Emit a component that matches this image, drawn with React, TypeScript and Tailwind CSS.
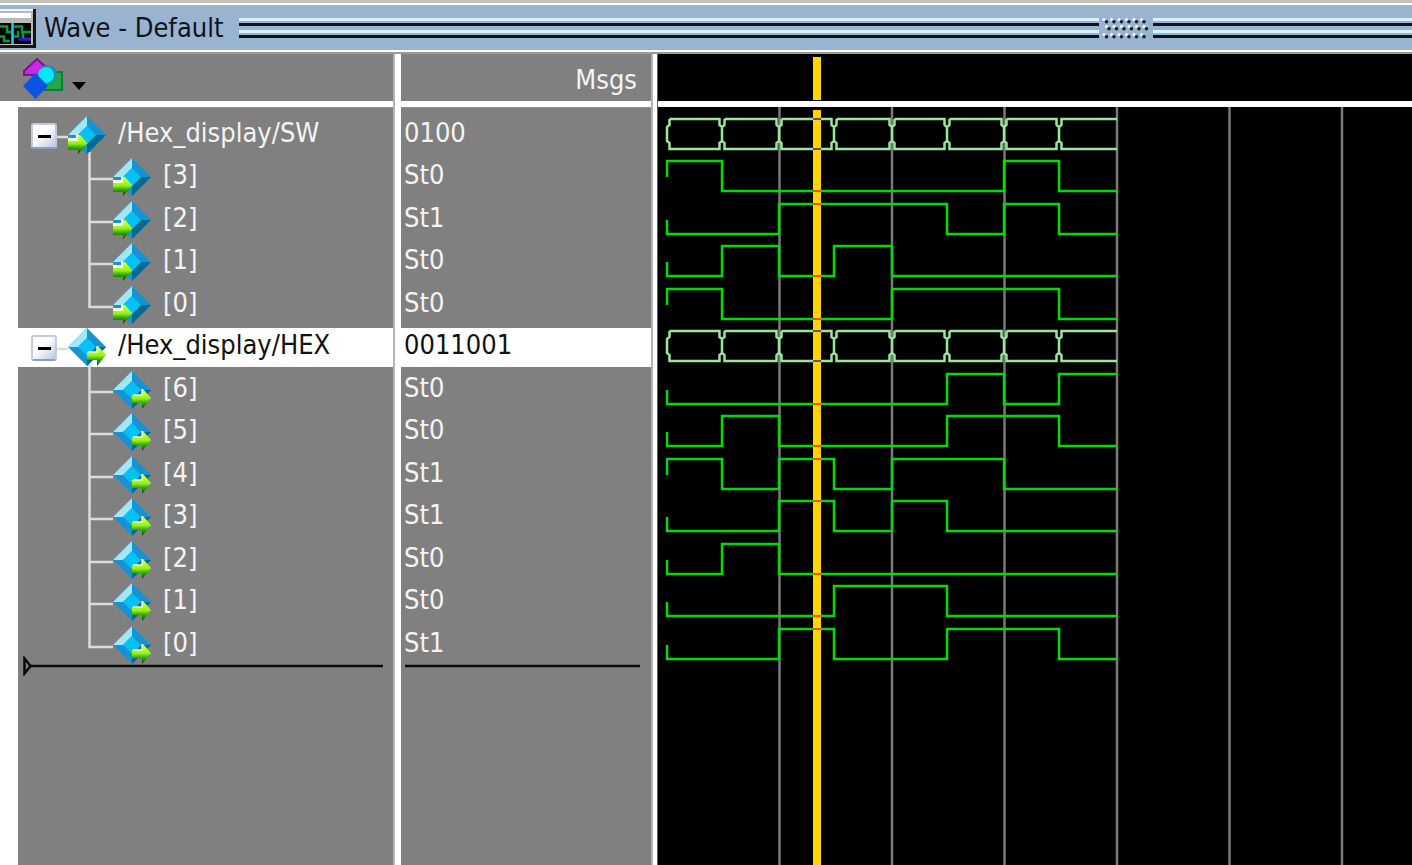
import { useState } from "react";

type Direction = "in" | "out";

type Signal = {
  id: string;
  group: string;
  name: string;
  value: string;
  direction: Direction;
  bits?: string;
  last?: boolean;
};

const SIGNALS: Signal[] = [
  { id: "sw", group: "sw", name: "/Hex_display/SW", value: "0100", direction: "in" },
  { id: "sw3", group: "sw", name: "[3]", value: "St0", direction: "in", bits: "10000010" },
  { id: "sw2", group: "sw", name: "[2]", value: "St1", direction: "in", bits: "00111010" },
  { id: "sw1", group: "sw", name: "[1]", value: "St0", direction: "in", bits: "01010000" },
  { id: "sw0", group: "sw", name: "[0]", value: "St0", direction: "in", bits: "10001110", last: true },
  { id: "hex", group: "hex", name: "/Hex_display/HEX", value: "0011001", direction: "out" },
  { id: "hex6", group: "hex", name: "[6]", value: "St0", direction: "out", bits: "00000101" },
  { id: "hex5", group: "hex", name: "[5]", value: "St0", direction: "out", bits: "01000110" },
  { id: "hex4", group: "hex", name: "[4]", value: "St1", direction: "out", bits: "10101100" },
  { id: "hex3", group: "hex", name: "[3]", value: "St1", direction: "out", bits: "00101000" },
  { id: "hex2", group: "hex", name: "[2]", value: "St0", direction: "out", bits: "01000000" },
  { id: "hex1", group: "hex", name: "[1]", value: "St0", direction: "out", bits: "00011000" },
  { id: "hex0", group: "hex", name: "[0]", value: "St1", direction: "out", bits: "00100110", last: true },
];

const SELECTED = "hex";

// Wave canvas geometry, measured from the canvas' own top left corner.
const EDGES = [9, 64, 121, 176, 234, 289, 346, 401, 459];
const CURSOR_X = 155;
const CURSOR_W = 8;
const CURSOR_SEGMENT = 2;
const GRID = Array.from({ length: 30 }, (_, i) => 121.5 + i * 112.5);

function rowTop(index: number) {
  return 9 + Math.floor(index * 42.5);
}

function bitPath(bits: string, top: number) {
  const high = top + 3;
  const low = top + 33;
  const level = (b: string) => (b === "1" ? high : low);
  let d = `M${EDGES[0]} ${top + 19}V${level(bits[0])}`;
  for (let i = 0; i < bits.length; i++) {
    d += `H${EDGES[i + 1]}`;
    if (i + 1 < bits.length && bits[i + 1] !== bits[i]) d += `V${level(bits[i + 1])}`;
  }
  return d;
}

function busPath(top: number) {
  const a = top + 3;
  const b = top + 33;
  return EDGES.slice(0, -1)
    .map((s, i) => {
      const e = EDGES[i + 1];
      const left = `V${b - 6}L${s} ${b - 8}V${a + 8}L${s + 2.5} ${a + 6}V${a}`;
      if (i === EDGES.length - 2) return `M${e} ${b}H${s + 2.5}${left}H${e}`;
      return `M${s + 2.5} ${a}H${e - 2.5}V${a + 6}L${e} ${a + 8}V${b - 8}L${e - 2.5} ${b - 6}V${b}H${s + 2.5}${left}`;
    })
    .join("");
}

function SignalIcon({ direction, stem }: { direction: Direction; stem?: boolean }) {
  return (
    <svg className="h-full w-[38px] shrink-0 overflow-visible" aria-hidden="true">
      {stem && <path d="M21.5 36V44" stroke="#dcdcdc" strokeWidth="2.5" />}
      <path d="M19 0L38 19L19 38L0 19Z" fill="#1792d2" />
      <path d="M19 0V10L10 19H0Z" fill="#a3e6f7" />
      <path d="M19 28V38L38 19H28Z" fill="#056a92" />
      <path d="M19 10L28 19L19 28L10 19Z" fill="#00c3f5" />
      {direction === "in" ? (
        <g>
          <path d="M0 24H10V19H12L19.500 27.500L10 38V34H0Z" fill="url(#arrow-fill)" />
          <path d="M0 22H8V18H10V25H0Z" fill="#f2ffdc" />
        </g>
      ) : (
        <g>
          <path d="M19 24H29V18H30L38 27L29 38V32H19Z" fill="url(#arrow-fill)" />
          <path d="M20 24H29V18" fill="none" stroke="#eaffc0" strokeWidth="1.5" />
        </g>
      )}
    </svg>
  );
}

function ArrowFill() {
  return (
    <svg className="absolute size-0" aria-hidden="true">
      <linearGradient id="arrow-fill" gradientUnits="userSpaceOnUse" x1="0" y1="20" x2="0" y2="37">
        <stop offset="0" stopColor="#d4ff4a" />
        <stop offset="0.45" stopColor="#93f212" />
        <stop offset="0.65" stopColor="#3db400" />
        <stop offset="1" stopColor="#064f00" />
      </linearGradient>
    </svg>
  );
}

function WindowIcon() {
  return (
    <svg className="h-[40px] w-[36px] shrink-0" aria-hidden="true">
      <path d="M0 1H36V40H0Z" fill="#161616" />
      <path d="M0 1H33V37H0Z" fill="#b9b9b9" />
      <path d="M0 1H33V3H0Z" fill="#f4f4f4" />
      <path d="M0 5H31V10H0Z" fill="#ffffff" />
      <path d="M0 15H31V36H0Z" fill="#000000" />
      <path
        d="M0 18.500H7V24H11M0 28.500H4V33H10M14 18.500H22V24H31M14 28.500H18V23M23 24V31H31"
        fill="none"
        stroke="#0a9a3c"
        strokeWidth="2.500"
      />
      <path d="M18 31.500H31" stroke="#3a10d8" strokeWidth="2.500" />
      <path d="M12.500 15V36" stroke="#18d4ee" strokeWidth="2.500" />
    </svg>
  );
}

function TitleLines({ className }: { className: string }) {
  return (
    <div className={`flex flex-col gap-[4px] ${className}`} aria-hidden="true">
      <div className="h-[8px] border-t-[3px] border-b-[3px] border-t-[#d2f3fc] border-b-[#10141a]" />
      <div className="h-[8px] border-t-[3px] border-b-[3px] border-t-[#d2f3fc] border-b-[#10141a]" />
    </div>
  );
}

function Grip() {
  const rows = [
    { x: 4, y: 2 },
    { x: 6.5, y: 9 },
    { x: 4, y: 17 },
  ];
  return (
    <svg className="h-[22px] w-[54px] shrink-0" aria-hidden="true">
      {rows.map((r) =>
        [0, 1, 2, 3, 4, 5].map((i) => (
          <g key={`${r.y}-${i}`}>
            <circle cx={r.x + 1 + i * 7.5} cy={r.y + 0.5} r="1.6" fill="#f4f8fb" />
            <circle cx={r.x + 3.5 + i * 7.5} cy={r.y + 2.8} r="1.8" fill="#1c2028" />
          </g>
        )),
      )}
    </svg>
  );
}

function ObjectsIcon() {
  return (
    <svg className="h-[42px] w-[42px]" aria-hidden="true">
      <path d="M2 18V14L15 2L26 12L20 18Z" fill="#c42be6" stroke="#7d0f92" strokeWidth="2" />
      <path d="M24 15H40V33H22Z" fill="#1faa48" stroke="#127a34" strokeWidth="2" />
      <circle cx="26" cy="17" r="9" fill="#2b86b8" />
      <circle cx="24" cy="18" r="8" fill="#05e6fb" />
      <path d="M13.500 16L26 29L13.500 42L1 29Z" fill="#0a54e4" />
    </svg>
  );
}

export default function App() {
  const [collapsed, setCollapsed] = useState<string[]>([]);
  const toggle = (group: string) =>
    setCollapsed((c) => (c.includes(group) ? c.filter((g) => g !== group) : [...c, group]));
  const rows = SIGNALS.filter((s) => !s.bits || !collapsed.includes(s.group));

  return (
    <div className="flex min-h-screen flex-col overflow-hidden bg-white font-['DejaVu_Sans_Condensed','DejaVu_Sans',sans-serif] text-[27px] leading-8 text-[#f4f4f4]">
      <ArrowFill />
      <header className="flex h-[54px] shrink-0 items-center border-t-[3px] border-b-[2px] border-t-[#c0c1bb] border-b-[#9a9a9a]">
        <div className="flex h-full w-full items-center border-t-2 border-b-2 border-white bg-[#99b4d1]">
          <WindowIcon />
          <h1 className="mr-4 ml-2 whitespace-nowrap text-[#10121c]">Wave - Default</h1>
          <TitleLines className="flex-1" />
          <Grip />
          <TitleLines className="w-[259px]" />
        </div>
      </header>

      <main className="flex flex-1">
        <section className="flex w-[395px] shrink-0 flex-col border-r-2 border-[#b4b4b4]" aria-label="Signals">
          <div className="flex h-[47px] shrink-0 items-center bg-[#808080] pl-[22px]">
            <button type="button" className="flex items-center gap-2" aria-label="Object filter">
              <ObjectsIcon />
              <svg className="mt-4 h-[8px] w-[14px]" aria-hidden="true">
                <path d="M0 0H14L7 8Z" fill="#000000" />
              </svg>
            </button>
          </div>
          <div className="mt-[6px] ml-[18px] flex-1 border-t border-[#909090] bg-[#808080] pt-2">
            <ul>
              {rows.map((s) => (
                <li key={s.id} className="odd:h-[42px] even:h-[43px]">
                  {s.bits ? (
                    <div className="flex h-full pl-[70px]">
                      <svg className="h-full w-[25px] shrink-0 overflow-visible" aria-hidden="true">
                        <path
                          d={s.last ? "M1.5 0V21H25" : "M1.5 0V43M1.5 21H25"}
                          fill="none"
                          stroke="#dcdcdc"
                          strokeWidth="2.5"
                        />
                      </svg>
                      <SignalIcon direction={s.direction} />
                      <span className="ml-3 pt-px">{s.name}</span>
                    </div>
                  ) : (
                    <div
                      className={`flex h-[39px] pl-[13px] ${s.id === SELECTED ? "bg-white text-[#111111]" : ""}`}
                    >
                      <button
                        type="button"
                        aria-label={`Toggle ${s.name}`}
                        aria-expanded={!collapsed.includes(s.group)}
                        onClick={() => toggle(s.group)}
                        className="mt-[7px] flex size-[26px] items-center justify-center rounded-[3px] border-2 border-[#c3cad9] border-b-[#8e9cbd] bg-linear-to-br from-white from-40% to-[#bcc8e2]"
                      >
                        <span className="h-[3px] w-[13px] bg-black" />
                      </button>
                      <svg className="h-full w-[11px] shrink-0" aria-hidden="true">
                        <path d="M0 21H11" stroke="#dcdcdc" strokeWidth="2.5" />
                      </svg>
                      <SignalIcon direction={s.direction} stem={!collapsed.includes(s.group)} />
                      <span className="ml-3 pt-px whitespace-nowrap">{s.name}</span>
                    </div>
                  )}
                </li>
              ))}
            </ul>
            <svg className="-mt-3 h-[20px] w-full" aria-hidden="true">
              <path d="M6.500 2.500V17.500L12.500 10Z" fill="none" stroke="#0a0a0a" strokeWidth="2.500" />
              <path d="M12 10H365" stroke="#0a0a0a" strokeWidth="2.500" />
            </svg>
          </div>
        </section>

        <section
          className="ml-[6px] flex w-[252px] shrink-0 flex-col border-r-2 border-[#b4b4b4]"
          aria-label="Values"
        >
          <div className="flex h-[47px] shrink-0 items-center justify-end bg-[#808080] pt-1 pr-[14px]">
            <h2>Msgs</h2>
          </div>
          <div className="mt-[6px] flex-1 border-t border-[#909090] bg-[#808080] pt-2">
            <ul>
              {rows.map((s) => (
                <li key={s.id} className="odd:h-[42px] even:h-[43px]">
                  <div className={`h-[39px] pt-px pl-[3px] ${s.id === SELECTED ? "bg-white text-[#111111]" : ""}`}>
                    {s.value}
                  </div>
                </li>
              ))}
            </ul>
            <svg className="-mt-3 h-[20px] w-full" aria-hidden="true">
              <path d="M4 10H239" stroke="#0a0a0a" strokeWidth="2.500" />
            </svg>
          </div>
        </section>

        <section className="ml-[4px] flex min-w-0 flex-1 flex-col border-l border-[#606060]" aria-label="Waveforms">
          <div className="h-[47px] shrink-0 bg-black">
            <svg className="h-full w-full" aria-hidden="true">
              <rect x={CURSOR_X} y="3" width={CURSOR_W} height="43" fill="#ffd500" />
            </svg>
          </div>
          <div className="mt-[6px] flex flex-1 bg-black">
            <svg className="h-auto w-0 flex-1" role="img" aria-label="Signal waveforms">
              {GRID.map((x) => (
                <line key={x} x1={x} x2={x} y1="0" y2="100%" stroke="#7a7a7a" strokeWidth="2.5" />
              ))}
              {rows.map((s, i) => (
                <path
                  key={s.id}
                  d={s.bits ? bitPath(s.bits, rowTop(i)) : busPath(rowTop(i))}
                  fill="none"
                  stroke={s.bits ? "#00dc00" : "#9be69b"}
                  strokeWidth="2.5"
                />
              ))}
              <rect x={CURSOR_X} y="3" width={CURSOR_W} height="100%" fill="#ffd500" />
              {rows.map((s, i) => {
                const top = rowTop(i);
                const levels = s.bits ? [s.bits[CURSOR_SEGMENT] === "1" ? 3 : 33] : [3, 33];
                return levels.map((l) => (
                  <rect
                    key={`${s.id}-${l}`}
                    x={CURSOR_X}
                    y={top + l - 1}
                    width={CURSOR_W}
                    height="2"
                    fill={s.bits ? "#ff4a10" : "#6a45a0"}
                  />
                ));
              })}
            </svg>
          </div>
        </section>
      </main>
    </div>
  );
}
